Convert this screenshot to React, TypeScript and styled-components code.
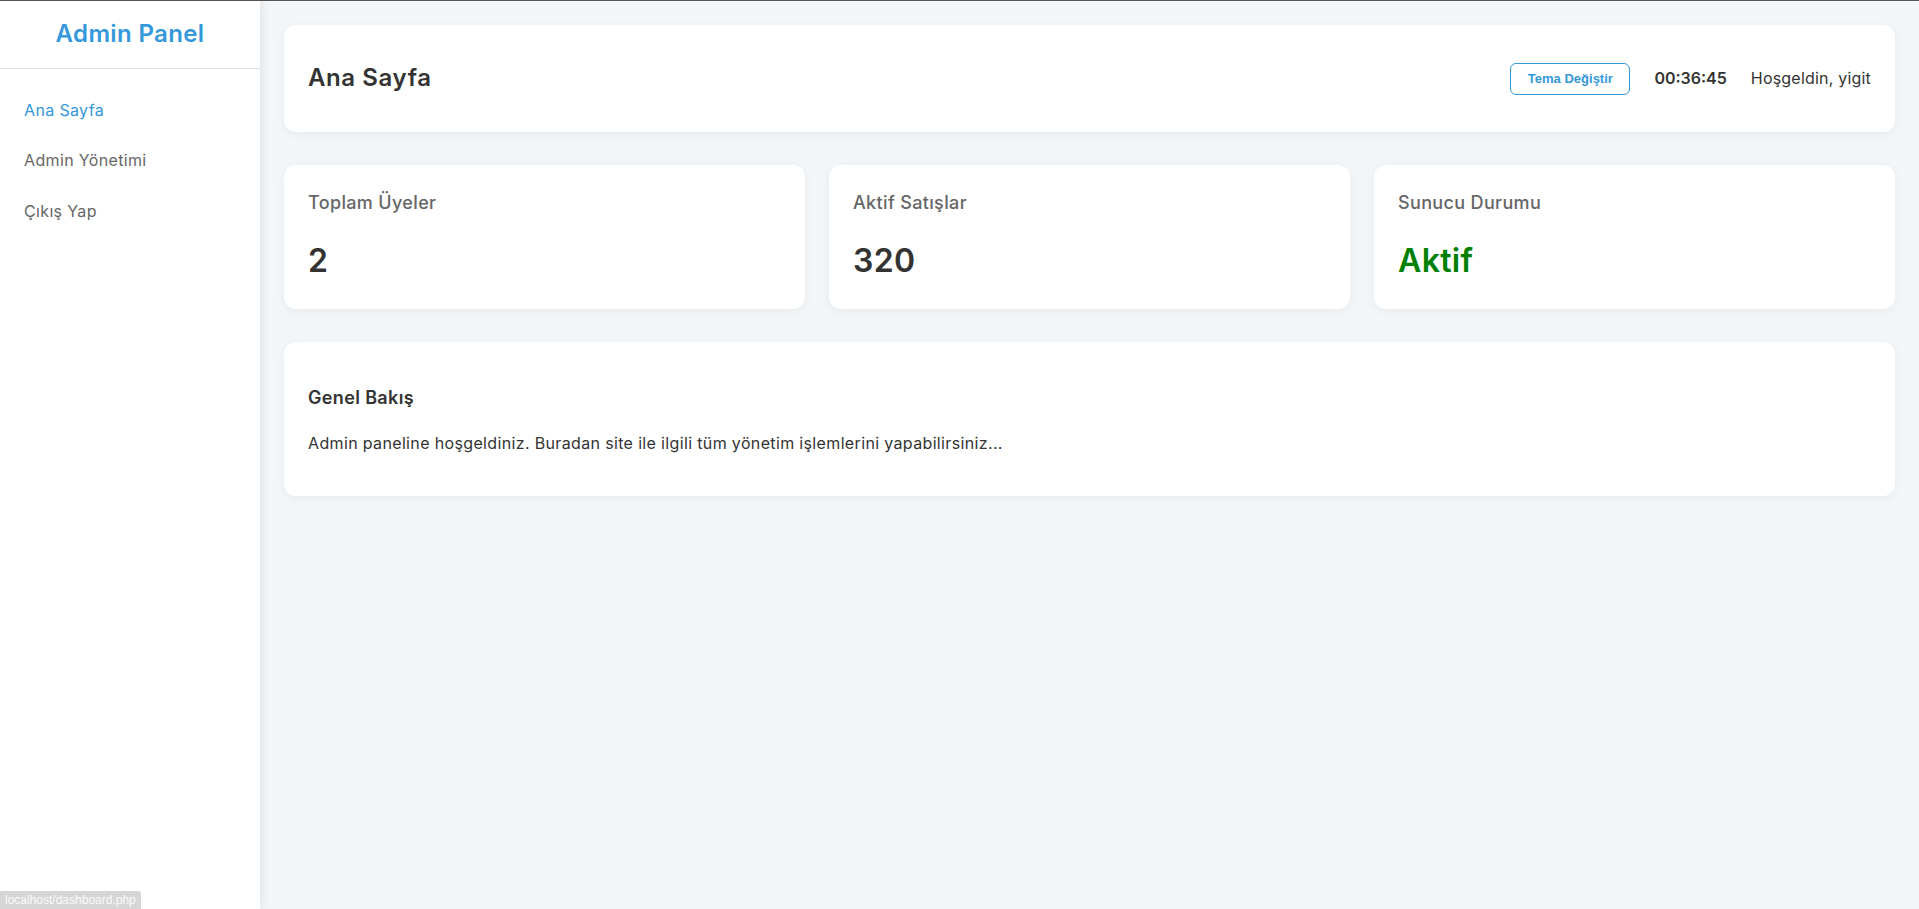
import React from 'react';
import styled, { createGlobalStyle } from 'styled-components';

const GlobalStyle = createGlobalStyle`
  * {
    box-sizing: border-box;
  }
  html, body {
    margin: 0;
    padding: 0;
    height: 100%;
  }
  body {
    font-family: Inter, "Noto Sans", sans-serif;
    line-height: 1.6;
    letter-spacing: 0.35px;
    color: #333;
    background: #f3f6f9;
    border-top: 1px solid #555;
  }
`;

const Layout = styled.div`
  display: flex;
  min-height: 908px;
`;

const Sidebar = styled.aside`
  width: 260px;
  flex-shrink: 0;
  background: #fff;
  box-shadow: 2px 0 10px rgba(0, 0, 0, 0.08);
  position: relative;
  z-index: 1;
`;

const Brand = styled.div`
  height: 68px;
  display: flex;
  align-items: center;
  justify-content: center;
  border-bottom: 1px solid #e2e2e2;
  color: #3498db;
  font-size: 24px;
  font-weight: 600;
`;

const Nav = styled.ul`
  list-style: none;
  margin: 0;
  padding: 16px 0;
`;

const NavLink = styled.a<{ $active?: boolean }>`
  display: block;
  padding: 12.5px 24px;
  font-size: 16px;
  text-decoration: none;
  color: ${({ $active }) => ($active ? '#3498db' : '#666')};
`;

const Main = styled.main`
  flex: 1;
  padding: 24px;
  display: flex;
  flex-direction: column;
  gap: 33px;
`;

const Card = styled.section`
  background: #fff;
  border-radius: 12px;
  box-shadow: 0 2px 10px rgba(0, 0, 0, 0.05);
  padding: 24px;
`;

const Header = styled(Card)`
  display: flex;
  align-items: center;
  justify-content: space-between;
  height: 107px;
  padding: 0 24px;
`;

const PageTitle = styled.h1`
  margin: 0;
  font-size: 24px;
  font-weight: 600;
  letter-spacing: 0.6px;
  color: #333;
`;

const HeaderRight = styled.div`
  display: flex;
  align-items: center;
  gap: 24px;
`;

const ThemeButton = styled.button`
  width: 120px;
  height: 32px;
  background: #fff;
  border: 1px solid #3498db;
  border-radius: 6px;
  color: #3498db;
  font-family: "Liberation Sans", Arial, sans-serif;
  font-weight: 700;
  font-size: 13px;
  letter-spacing: 0;
  cursor: pointer;
`;

const Clock = styled.span`
  font-size: 16px;
  font-weight: 600;
  letter-spacing: 0;
  color: #333;
`;

const Welcome = styled.span`
  font-size: 16px;
  letter-spacing: 0.2px;
  color: #333;
`;

const Stats = styled.div`
  display: grid;
  grid-template-columns: repeat(3, 1fr);
  gap: 24px;
`;

const StatLabel = styled.h3`
  margin: 0 0 18px;
  font-size: 18px;
  font-weight: 500;
  color: #666;
`;

const StatValue = styled.p<{ $color?: string }>`
  margin: 0;
  font-size: 32px;
  line-height: 49px;
  font-weight: 600;
  color: ${({ $color }) => $color || '#333'};
`;

const SectionTitle = styled.h3`
  margin: 18px 0;
  font-size: 18px;
  font-weight: 600;
  color: #333;
`;

const Text = styled.p`
  margin: 16px 0;
  font-size: 16px;
  color: #333;
`;

const StatusLink = styled.div`
  position: fixed;
  left: 0;
  bottom: 0;
  height: 18px;
  padding: 0 5px;
  background: #d6d6d6;
  border-top-right-radius: 3px;
  color: #fafafa;
  font-family: "Liberation Sans", Arial, sans-serif;
  font-size: 12px;
  letter-spacing: 0;
  line-height: 18px;
  z-index: 5;
`;

const stats = [
  { label: 'Toplam Üyeler', value: '2' },
  { label: 'Aktif Satışlar', value: '320' },
  { label: 'Sunucu Durumu', value: 'Aktif', color: '#008000' },
];

export default function App() {
  return (
    <>
      <GlobalStyle />
      <Layout>
        <Sidebar>
          <Brand>Admin Panel</Brand>
          <Nav>
            <li><NavLink href="#" $active>Ana Sayfa</NavLink></li>
            <li><NavLink href="#">Admin Yönetimi</NavLink></li>
            <li><NavLink href="#">Çıkış Yap</NavLink></li>
          </Nav>
        </Sidebar>
        <Main>
          <Header>
            <PageTitle>Ana Sayfa</PageTitle>
            <HeaderRight>
              <ThemeButton>Tema Değiştir</ThemeButton>
              <Clock>00:36:45</Clock>
              <Welcome>Hoşgeldin, yigit</Welcome>
            </HeaderRight>
          </Header>
          <Stats>
            {stats.map((s) => (
              <Card key={s.label}>
                <StatLabel>{s.label}</StatLabel>
                <StatValue $color={s.color}>{s.value}</StatValue>
              </Card>
            ))}
          </Stats>
          <Card>
            <SectionTitle>Genel Bakış</SectionTitle>
            <Text>Admin paneline hoşgeldiniz. Buradan site ile ilgili tüm yönetim işlemlerini yapabilirsiniz...</Text>
          </Card>
        </Main>
      </Layout>
      <StatusLink>localhost/dashboard.php</StatusLink>
    </>
  );
}
